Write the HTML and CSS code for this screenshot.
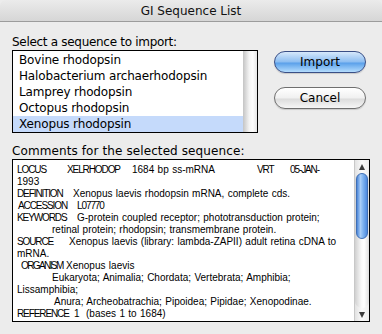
FILE: index.html
```html
<!DOCTYPE html>
<html lang="en">
<head>
    <meta charset="UTF-8">
    <title>GI Sequence List</title>
    <link rel="stylesheet" href="styles.css">
</head>
<body>
    <div class="window">
        <div class="titlebar">GI Sequence List</div>

        <div class="content">
            <div class="top">
                <div class="picker">
                    <div class="label first-label">Select a sequence to import:</div>
                    <div class="listbox">
                        <ul class="items">
                            <li>Bovine rhodopsin</li>
                            <li>Halobacterium archaerhodopsin</li>
                            <li>Lamprey rhodopsin</li>
                            <li>Octopus rhodopsin</li>
                            <li class="selected">Xenopus rhodopsin</li>
                        </ul>
                        <div class="track"></div>
                    </div>
                </div>

                <div class="buttons">
                    <button class="btn default">Import</button>
                    <button class="btn">Cancel</button>
                </div>
            </div>

            <div class="label comments-label">Comments for the selected sequence:</div>
            <div class="textbox">
                <div class="text">
                    <div class="line"><span class="col tag c-locus">LOCUS</span><span class="col tag c-name">XELRHODOP</span><span class="col c-len">1684 bp ss-mRNA</span><span class="col tag c-div">VRT</span><span class="tag">05-JAN-</span></div>
                    <div class="line">1993</div>
                    <div class="line"><span class="col tag c-def">DEFINITION</span>Xenopus laevis rhodopsin mRNA, complete cds.</div>
                    <div class="line ind1"><span class="col tag c-acc">ACCESSION</span><span class="tag">L07770</span></div>
                    <div class="line"><span class="col tag c-kw">KEYWORDS</span>G-protein coupled receptor; phototransduction protein;</div>
                    <div class="line ind-wrap">retinal protein; rhodopsin; transmembrane protein.</div>
                    <div class="line"><span class="col tag c-src">SOURCE</span>Xenopus laevis (library: lambda-ZAPII) adult retina cDNA to</div>
                    <div class="line">mRNA.</div>
                    <div class="line ind2"><span class="col tag c-org">ORGANISM</span>Xenopus laevis</div>
                    <div class="line ind-wrap">Eukaryota; Animalia; Chordata; Vertebrata; Amphibia;</div>
                    <div class="line">Lissamphibia;</div>
                    <div class="line ind-wrap2">Anura; Archeobatrachia; Pipoidea; Pipidae; Xenopodinae.</div>
                    <div class="line"><span class="col tag c-ref">REFERENCE</span><span class="col c-num">1</span>(bases 1 to 1684)</div>
                    <div class="line ind2"><span class="col tag c-auth">AUTHORS</span>Knox, B.E., Saha, H.I., Smith, D. and Ishii, S.</div>
                </div>
                <div class="scroller">
                    <div class="arrow up"></div>
                    <div class="rail">
                        <div class="thumb"></div>
                    </div>
                    <div class="arrow down"></div>
                </div>
            </div>
        </div>
    </div>
</body>
</html>
```

FILE: styles.css
```css
body {
    margin: 0;
    padding: 0;
    background-color: #ececec;
    font-family: "DejaVu Sans", sans-serif;
    font-size: 12px;
    color: #000;
}

.window {
    width: 382px;
    height: 334px;
    background-color: #ececec;
    overflow: hidden;
}

.titlebar {
    height: 21px;
    line-height: 22px;
    text-align: center;
    font-size: 12px;
    color: #111;
    background: linear-gradient(#ebebeb, #d6d6d6);
    border-bottom: 1px solid #9c9c9c;
    border-top-left-radius: 6px;
    border-top-right-radius: 6px;
}

.content {
    padding: 13px 0 0 12px;
}

.top {
    display: flex;
}

.label {
    height: 15px;
    line-height: 15px;
}

.first-label {
    letter-spacing: -0.3px;
}

.listbox {
    display: flex;
    width: 244px;
    height: 81px;
    border: 1px solid #000;
    background-color: #fff;
}

.items {
    list-style: none;
    margin: 0;
    padding: 1px 0 0 0;
    flex: 1;
    letter-spacing: -0.15px;
}

.items li {
    height: 16px;
    line-height: 16px;
    padding-left: 6px;
}

.items li.selected {
    background-color: #c5dafb;
}

.track {
    width: 14px;
    background: linear-gradient(to right, #c4c4c4, #f4f4f4 45%, #fdfdfd 70%, #e6e6e6);
}

.buttons {
    display: flex;
    flex-direction: column;
    gap: 14px;
    margin-left: 16px;
    padding-top: 16px;
}

.btn {
    width: 92px;
    height: 22px;
    padding: 0;
    font-family: "DejaVu Sans", sans-serif;
    font-size: 12px;
    color: #000;
    border-radius: 11px;
    border: 1px solid #6f6f6f;
    background: linear-gradient(#ffffff, #f0f0f0 50%, #dcdcdc 55%, #f6f6f6);
    box-shadow: 0 1px 1px rgba(0, 0, 0, 0.15);
}

.btn.default {
    border-color: #3a4f86;
    background: linear-gradient(#d6e8fb, #8cbdf1 50%, #5aa0ea 55%, #b4dcfd);
}

.comments-label {
    margin-top: 11px;
    letter-spacing: 0.1px;
}

.textbox {
    display: flex;
    width: 356px;
    height: 161px;
    border: 1px solid #000;
    background-color: #fff;
}

.text {
    flex: 1;
    padding: 4px 0 0 4px;
    overflow: hidden;
    font-family: "Liberation Sans", sans-serif;
    font-size: 10px;
    word-spacing: 0.6px;
}

.line {
    height: 12px;
    line-height: 12px;
    white-space: nowrap;
}

.col {
    display: inline-block;
}

/* Geneva capitals are narrower than Arial's */
.tag {
    letter-spacing: -1.1px;
}

.ind1 {
    padding-left: 1px;
}

.ind2 {
    padding-left: 4px;
}

.ind-wrap {
    padding-left: 35px;
}

.ind-wrap2 {
    padding-left: 37px;
}

.c-locus { width: 50px; }
.c-name { width: 65px; }
.c-len { width: 125px; }
.c-div { width: 33px; }
.c-def { width: 56px; }
.c-acc { width: 59px; }
.c-kw { width: 60px; }
.c-src { width: 52px; }
.c-org { width: 45px; letter-spacing: -1.6px; }
.c-ref { width: 57px; }
.c-num { width: 12px; }
.c-auth { width: 45px; }

.scroller {
    display: flex;
    flex-direction: column;
    width: 14px;
    border-left: 1px solid #c8c8c8;
    background: linear-gradient(to right, #e2e2e2, #fafafa 50%, #eeeeee);
}

.arrow {
    height: 13px;
    display: flex;
    align-items: center;
    justify-content: center;
}

.arrow::after {
    content: "";
    border-left: 3px solid transparent;
    border-right: 3px solid transparent;
}

.arrow.up::after {
    border-bottom: 6px solid #3c3c3c;
}

.arrow.down::after {
    border-top: 6px solid #3c3c3c;
}

.rail {
    flex: 1;
    padding: 0 1px;
    border-radius: 7px;
    background: linear-gradient(to right, #d0d0d0, #f8f8f8 45%, #ffffff 65%, #dedede);
}

.thumb {
    height: 64px;
    border-radius: 6px;
    border: 1px solid #3f6fb5;
    background: linear-gradient(to right, #4c86d8, #a8cdf7 35%, #7fb3f0 60%, #4d8ae0);
}
```
